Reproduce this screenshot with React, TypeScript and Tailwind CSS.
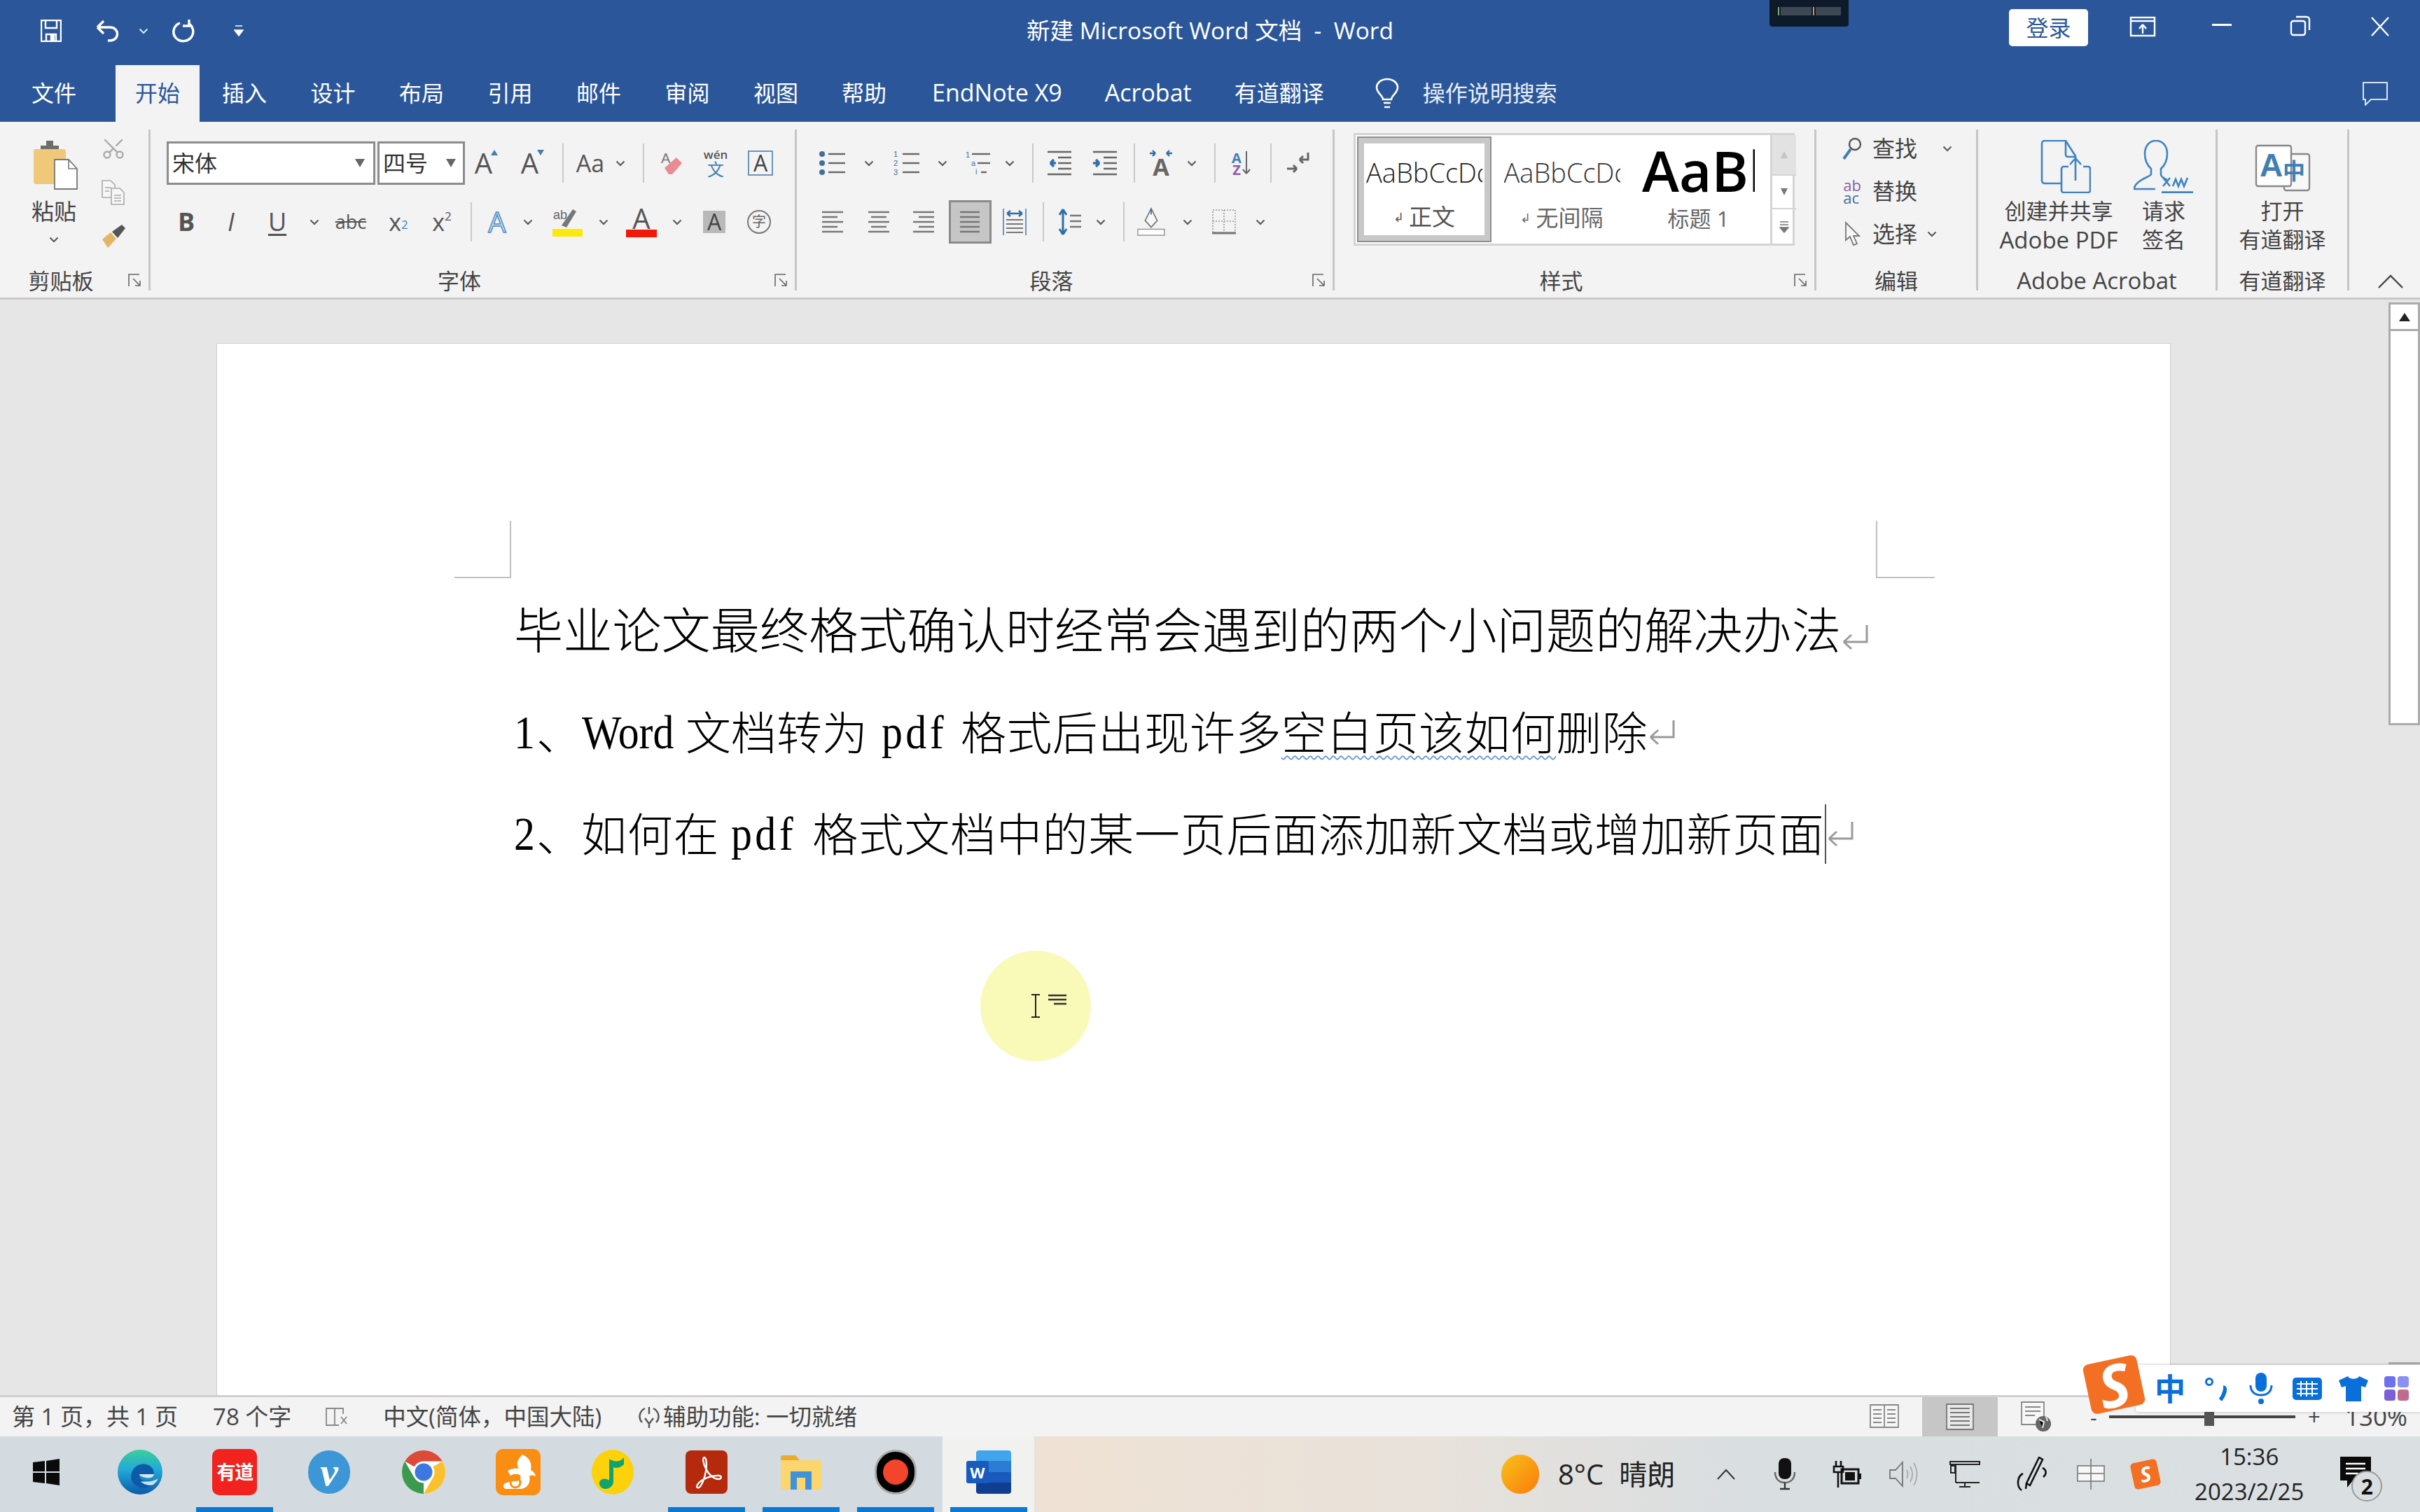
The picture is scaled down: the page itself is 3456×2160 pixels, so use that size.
import type { ReactNode } from "react";
import { Scissors } from "lucide-react";

const Slot = ({ c, children }: { c: string; children?: ReactNode }) => (
  <div className={`flex shrink-0 items-center justify-center ${c}`}>{children}</div>
);
const Chev = ({ color = "#555" }: { color?: string }) => (
  <svg width="14" height="9" viewBox="0 0 14 9"><path d="M1.5 1.5 7 7l5.5-5.5" stroke={color} strokeWidth="2" fill="none" /></svg>
);
const Sep = () => <div className="h-[56px] w-[2px] bg-[#c9c9c9]" />;
const Launcher = () => (
  <svg width="20" height="20" viewBox="0 0 20 20" fill="none" stroke="#666" strokeWidth="1.6"><path d="M1 18V1h15M7 7l10 10M17 10v7h-7" /></svg>
);
const Group = ({ c, label, launcher, children }: { c: string; label: ReactNode; launcher?: boolean; children?: ReactNode }) => (
  <div className={`flex h-[230px] shrink-0 flex-col border-r-[3px] border-[#c6c6c6] ${c}`}>
    <div className="h-[202px]">{children}</div>
    <div className="flex h-[28px] items-center text-[31px] leading-[28px] text-[#444]">
      <div className="flex-1 text-center whitespace-nowrap">{label}</div>
      {launcher && <div className="flex w-[38px] items-center justify-center"><Launcher /></div>}
    </div>
  </div>
);

const BigA = ({ up }: { up: boolean }) => (
  <div className="flex items-start text-[40px] leading-[40px] text-[#555]">
    <span>A</span>
    <svg width="12" height="10" viewBox="0 0 12 10" className="-ml-[3px]">
      <path d={up ? "M6 1l5 8H1z" : "M1 1h10L6 9z"} fill="#4a7ba8" />
    </svg>
  </div>
);
const ListLines = ({ kind }: { kind: "b" | "n" | "m" }) => (
  <svg width="40" height="36" viewBox="0 0 40 36" fontFamily="Liberation Sans" fontSize="11" fill="#3f6f9c">
    {kind === "b" && [5, 18, 31].map((y) => <circle key={y} cx="5" cy={y} r="4" fill="#3f6f9c" />)}
    {kind === "n" && ["1", "2", "3"].map((t, i) => <text key={t} x="1" y={9 + i * 13}>{t}</text>)}
    {kind === "m" && (<><text x="1" y="10">1</text><text x="9" y="22">a</text><text x="15" y="34">i</text></>)}
    {kind !== "m" ? [5, 18, 31].map((y) => <path key={y} d={`M14 ${y}h24`} stroke="#666" strokeWidth="2.4" />) : (
      <>
        <path d="M10 5h26" stroke="#666" strokeWidth="2.4" />
        <path d="M18 18h18" stroke="#666" strokeWidth="2.4" />
        <path d="M23 31h8" stroke="#666" strokeWidth="2.4" />
      </>
    )}
  </svg>
);
const Indent = ({ inward }: { inward: boolean }) => (
  <svg width="38" height="36" viewBox="0 0 38 36" fill="none">
    <path d="M2 2h34M2 34h34M17 10h19M17 18h19M17 26h19" stroke="#666" strokeWidth="2.4" />
    <path d={inward ? "M14 18H6m0 0 5-5m-5 5 5 5" : "M2 18h9m0 0-5-5m5 5-5 5"} stroke="#2f6ea8" strokeWidth="3.4" />
  </svg>
);
const Align = ({ mode }: { mode: "l" | "c" | "r" | "j" }) => {
  const ys = [2, 9, 16, 23, 30];
  const d = ys
    .map((y, i) => {
      const short = i % 2 === 1 ? 8 : 0;
      if (mode === "j") return `M1 ${y}h28`;
      if (mode === "l") return `M1 ${y}h${30 - short}`;
      if (mode === "r") return `M${1 + short} ${y}h${30 - short}`;
      return `M${1 + short / 2} ${y}h${30 - short}`;
    })
    .join("");
  return <svg width="32" height="33" viewBox="0 0 32 33"><path d={d} stroke="#777" strokeWidth="2.4" fill="none" /></svg>;
};

const PasteIcon = () => (
  <svg width="64" height="72" viewBox="0 0 64 72">
    <rect x="1" y="14" width="46" height="50" rx="3" fill="#efc87a" />
    <path d="M11 14V9h8V2h10v7h8v5z" fill="#6d6d6d" />
    <path d="M31 29h20l12 13v29H31z" fill="#fff" stroke="#777" strokeWidth="1.8" />
    <path d="M51 29v13h12" fill="none" stroke="#777" strokeWidth="1.6" />
  </svg>
);
const CopyIcon = () => (
  <svg width="34" height="36" viewBox="0 0 34 36" fill="#f6f6f6" stroke="#aaa" strokeWidth="1.6">
    <path d="M1 1h12l6 6v18H1z" />
    <path d="M14 12h12l6 6v17H14z" />
    <path d="M5 11h9M5 16h6M18 22h10M18 26h10M18 30h10" fill="none" />
  </svg>
);
const BrushIcon = () => (
  <svg width="36" height="34" viewBox="0 0 36 34">
    <path d="M2 22l12-10 8 9-12 13z" fill="#e3b565" />
    <path d="M16 11l14-10 5 5-11 14z" fill="#555" />
  </svg>
);

const FontGroup = () => (
  <div className="flex flex-col gap-[24px] pt-[18px]">
    <div className="flex h-[60px] items-center pl-[23px]">
      <div className="flex h-[62px] w-[298px] shrink-0 items-center justify-between border-[3px] border-[#8c8c8c] bg-white pr-[12px] pl-[5px] text-[32px] text-[#333]">
        <span>宋体</span>
        <svg width="14" height="16" viewBox="0 0 14 16"><path d="M0 2h14L7 14z" fill="#666" /></svg>
      </div>
      <div className="ml-[3px] flex h-[62px] w-[125px] shrink-0 items-center justify-between border-[3px] border-[#8c8c8c] bg-white pr-[10px] pl-[5px] text-[32px] text-[#333]">
        <span>四号</span>
        <svg width="14" height="16" viewBox="0 0 14 16"><path d="M0 2h14L7 14z" fill="#666" /></svg>
      </div>
      <Slot c="w-[62px]"><BigA up /></Slot>
      <Slot c="w-[70px]"><BigA up={false} /></Slot>
      <Slot c="w-[16px]"><Sep /></Slot>
      <Slot c="w-[62px] text-[34px] text-[#555]">Aa</Slot>
      <Slot c="w-[24px]"><Chev /></Slot>
      <Slot c="w-[42px]"><Sep /></Slot>
      <Slot c="w-[38px]">
        <svg width="32" height="36" viewBox="0 0 32 36">
          <text x="1" y="18" fontSize="20" fill="#777" fontFamily="Liberation Sans">A</text>
          <path d="M6 25 23 10l8 8-14 16h-5z" fill="#e88c92" />
        </svg>
      </Slot>
      <Slot c="w-[88px]">
        <div className="flex flex-col items-center leading-[18px]">
          <span className="text-[17px] font-semibold text-[#555]">wén</span>
          <span className="text-[24px] leading-[24px] text-[#3f7fb5]">文</span>
        </div>
      </Slot>
      <Slot c="w-[40px]">
        <div className="flex h-[36px] w-[36px] items-center justify-center border-2 border-[#6c95ba] text-[32px] leading-none text-[#444]">A</div>
      </Slot>
    </div>
    <div className="flex h-[60px] items-center pl-[19px] text-[#555]">
      <Slot c="w-[64px] text-[36px] font-bold">B</Slot>
      <Slot c="w-[64px] text-[36px] font-medium italic">I</Slot>
      <Slot c="w-[68px] text-[36px] underline underline-offset-4">U</Slot>
      <Slot c="w-[38px]"><Chev /></Slot>
      <Slot c="w-[66px] text-[27px] line-through">abc</Slot>
      <Slot c="w-[70px] text-[34px]">x<sub className="text-[17px] text-[#3f7fb5]">2</sub></Slot>
      <Slot c="w-[54px] text-[34px]">x<sup className="text-[17px]">2</sup></Slot>
      <Slot c="w-[30px]"><Sep /></Slot>
      <Slot c="w-[44px] text-[40px] leading-none text-[#cfe3f4] [-webkit-text-stroke:1.5px_#4f8cc0]">A</Slot>
      <Slot c="w-[44px]"><Chev /></Slot>
      <Slot c="w-[70px]">
        <svg width="46" height="42" viewBox="0 0 46 42">
          <text x="2" y="17" fontSize="18" fill="#666" fontFamily="Liberation Sans">ab</text>
          <path d="M14 26 30 3l5 3-14 23z" fill="#777" />
          <rect x="1" y="31" width="43" height="11" fill="#fce80a" />
        </svg>
      </Slot>
      <Slot c="w-[32px]"><Chev /></Slot>
      <Slot c="w-[76px]">
        <div className="flex flex-col items-center">
          <span className="text-[40px] leading-[32px] text-[#555]">A</span>
          <span className="h-[11px] w-[44px] bg-[#f01a0a]" />
        </div>
      </Slot>
      <Slot c="w-[26px]"><Chev /></Slot>
      <Slot c="w-[80px]"><div className="flex h-[32px] w-[32px] items-center justify-center bg-[#b9b9b9] text-[32px] leading-none text-[#444]">A</div></Slot>
      <Slot c="w-[48px]">
        <div className="flex h-[34px] w-[34px] items-center justify-center rounded-full border-2 border-[#777] text-[20px] leading-none text-[#666]">字</div>
      </Slot>
    </div>
  </div>
);

const ParaGroup = () => (
  <div className="flex flex-col gap-[24px] pt-[18px]">
    <div className="flex h-[60px] items-center pl-[27px]">
      <Slot c="w-[48px]"><ListLines kind="b" /></Slot>
      <Slot c="w-[56px]"><Chev /></Slot>
      <Slot c="w-[52px]"><ListLines kind="n" /></Slot>
      <Slot c="w-[50px]"><Chev /></Slot>
      <Slot c="w-[54px]"><ListLines kind="m" /></Slot>
      <Slot c="w-[34px]"><Chev /></Slot>
      <Slot c="w-[32px]"><Sep /></Slot>
      <Slot c="w-[44px]"><Indent inward /></Slot>
      <Slot c="ml-[18px] w-[50px]"><Indent inward={false} /></Slot>
      <Slot c="w-[34px]"><Sep /></Slot>
      <Slot c="w-[42px]">
        <div className="flex flex-col items-center">
          <svg width="36" height="10" viewBox="0 0 36 10"><path d="M2 5h8m0 0-4-4m4 4-4 4M34 5h-8m0 0 4-4m-4 4 4 4" transform="matrix(-1 0 0 1 36 0)" stroke="#2f6ea8" strokeWidth="2.4" fill="none" /></svg>
          <span className="text-[34px] leading-[28px] font-bold text-[#666]">A</span>
        </div>
      </Slot>
      <Slot c="w-[46px]"><Chev /></Slot>
      <Slot c="w-[20px]"><Sep /></Slot>
      <Slot c="w-[56px]">
        <div className="flex items-end">
          <div className="flex flex-col items-center text-[20px] leading-[17px] font-bold">
            <span className="text-[#3f7fb5]">A</span>
            <span className="text-[#8a5fa8]">Z</span>
          </div>
          <svg width="14" height="36" viewBox="0 0 14 36"><path d="M7 1v32m0 0-5-6m5 6 5-6" stroke="#666" strokeWidth="2" fill="none" /></svg>
        </div>
      </Slot>
      <Slot c="w-[28px]"><Sep /></Slot>
      <Slot c="w-[48px]">
        <svg width="34" height="34" viewBox="0 0 34 34" fill="none" stroke="#666" strokeWidth="3">
          <path d="M32 2v10H20m0 0 5-5m-5 5 5 5" />
          <path d="M2 25h14m0 0-5-5m5 5-5 5" />
        </svg>
      </Slot>
    </div>
    <div className="flex h-[60px] items-center pl-[27px]">
      <Slot c="w-[48px]"><Align mode="l" /></Slot>
      <Slot c="w-[84px]"><Align mode="c" /></Slot>
      <Slot c="w-[44px]"><Align mode="r" /></Slot>
      <Slot c="ml-[14px] h-[62px] w-[61px] border-[3px] border-[#8a8a8a] bg-[#c6c6c6]"><Align mode="j" /></Slot>
      <Slot c="w-[66px]">
        <svg width="36" height="38" viewBox="0 0 36 38" fill="none">
          <path d="M2 0v38M34 0v38" stroke="#5a8fc0" strokeWidth="1.8" />
          <path d="M6 16h24M6 22h24M6 28h24M6 34h24" stroke="#777" strokeWidth="2.2" />
          <path d="M7 7h22M7 7l5-4M7 7l5 4M29 7l-5-4M29 7l-5 4" stroke="#2f6ea8" strokeWidth="2.4" />
        </svg>
      </Slot>
      <Slot c="w-[16px]"><Sep /></Slot>
      <Slot c="w-[60px]">
        <svg width="36" height="38" viewBox="0 0 36 38" fill="none">
          <path d="M8 1v36M8 1 3 9M8 1l5 8M8 37l-5-8M8 37l5-8" stroke="#2f6ea8" strokeWidth="3" />
          <path d="M18 10h16M18 18h16M18 26h16" stroke="#777" strokeWidth="2.4" />
        </svg>
      </Slot>
      <Slot c="w-[28px]"><Chev /></Slot>
      <Slot c="w-[38px]"><Sep /></Slot>
      <Slot c="w-[40px]">
        <svg width="42" height="42" viewBox="0 0 42 42" fill="none">
          <path d="M21 1l9 18-9 10-9-10z" fill="#f7f7f7" stroke="#777" strokeWidth="1.8" />
          <path d="M21 1v9" stroke="#2f6ea8" strokeWidth="1.8" />
          <rect x="1" y="32" width="40" height="9" fill="#fff" stroke="#999" strokeWidth="1.6" />
        </svg>
      </Slot>
      <Slot c="w-[64px]"><Chev /></Slot>
      <Slot c="w-[40px]">
        <svg width="34" height="36" viewBox="0 0 34 36" fill="none">
          <path d="M1 1h32v32H1zM17 1v32M1 17h32" stroke="#999" strokeWidth="1.6" strokeDasharray="2 2" />
          <path d="M0 34h34" stroke="#777" strokeWidth="3" />
        </svg>
      </Slot>
      <Slot c="w-[64px]"><Chev /></Slot>
    </div>
  </div>
);

const StyleGallery = () => (
  <div className="pt-[5px] pl-[27px]">
    <div className="flex h-[161px] w-[630px] border-[3px] border-[#d4d4d4] bg-white">
      <div className="m-[2px] flex w-[192px] shrink-0 flex-col items-center border-[10px] border-[#c8c8c8] outline-2 outline-[#8f8f8f] -outline-offset-2">
        <div className="mt-[18px] h-[46px] w-[166px] overflow-hidden text-[38px] leading-[46px] font-light whitespace-nowrap text-[#222]">AaBbCcDc</div>
        <div className="mt-[21px] flex items-center gap-[7px] text-[33px] leading-[40px] text-[#555]"><span className="text-[18px]">↲</span>正文</div>
      </div>
      <div className="ml-[6px] flex w-[185px] shrink-0 flex-col items-center">
        <div className="mt-[30px] h-[46px] w-[166px] overflow-hidden text-[38px] leading-[46px] font-light whitespace-nowrap text-[#333]">AaBbCcDc</div>
        <div className="mt-[22px] flex items-center gap-[7px] text-[32px] leading-[40px] text-[#666]"><span className="text-[18px]">↲</span>无间隔</div>
      </div>
      <div className="flex w-[205px] shrink-0 flex-col items-center">
        <div className="mt-[11px] h-[78px] w-[161px] overflow-hidden text-[80px] leading-[78px] font-semibold whitespace-nowrap text-black">AaBbCc</div>
        <div className="mt-[10px] text-[31px] leading-[40px] text-[#666]">标题 1</div>
      </div>
      <div className="ml-auto flex w-[37px] shrink-0 flex-col border-l-[3px] border-[#d4d4d4]">
        <Slot c="h-[56px] bg-[#e2e2e2]"><svg width="12" height="12" viewBox="0 0 12 12"><path d="M6 1l5 10H1z" fill="#c4c4c4" /></svg></Slot>
        <Slot c="h-[50px] border-y-[2px] border-[#d4d4d4]"><svg width="12" height="12" viewBox="0 0 12 12"><path d="M1 1h10L6 11z" fill="#777" /></svg></Slot>
        <Slot c="flex-1"><svg width="14" height="18" viewBox="0 0 14 18"><path d="M1 2h12M1 6h12M1 10h12L7 17z" fill="#777" stroke="#777" strokeWidth="1.4" /></svg></Slot>
      </div>
    </div>
  </div>
);

const EditGroup = () => (
  <div className="flex flex-col gap-[7px] text-[32px] text-[#444]">
    <div className="flex h-[54px] items-center">
      <Slot c="ml-[31px] w-[40px]">
        <svg width="28" height="34" viewBox="0 0 28 34" fill="none"><circle cx="18" cy="11" r="8" stroke="#555" strokeWidth="2.4" /><path d="M12 18 2 32" stroke="#3f7fb5" strokeWidth="4" /></svg>
      </Slot>
      <span className="ml-[9px]">查找</span>
      <Slot c="ml-[36px] w-[14px]"><Chev /></Slot>
    </div>
    <div className="flex h-[54px] items-center">
      <Slot c="ml-[31px] w-[40px]">
        <div className="flex flex-col text-[22px] leading-[18px]"><span className="text-[#8a5fa8]">ab</span><span className="text-[#3f6f9c]">ac</span></div>
      </Slot>
      <span className="ml-[9px]">替换</span>
    </div>
    <div className="flex h-[54px] items-center">
      <Slot c="ml-[31px] w-[40px]">
        <svg width="24" height="36" viewBox="0 0 24 36"><path d="M3 2v25l6-5 5 12 5-2-5-11h8z" fill="#f7f7f7" stroke="#777" strokeWidth="1.8" /></svg>
      </Slot>
      <span className="ml-[9px]">选择</span>
      <Slot c="ml-[14px] w-[14px]"><Chev /></Slot>
    </div>
  </div>
);

const Blue = "#3f83c4";
const PdfShare = () => (
  <svg width="72" height="76" viewBox="0 0 72 76" fill="none" stroke={Blue} strokeWidth="2.6">
    <path d="M30 62H6a4 4 0 0 1-4-4V5a4 4 0 0 1 4-4h30l14 22v6" />
    <path d="M36 1v20a3 3 0 0 0 3 3h11" />
    <path d="M40 38h-7a3 3 0 0 0-3 3v31a3 3 0 0 0 3 3h35a3 3 0 0 0 3-3V41a3 3 0 0 0-3-3h-7" />
    <path d="M50 58V26m0 0-8 9m8-9 8 9" />
  </svg>
);
const SignPerson = () => (
  <svg width="86" height="76" viewBox="0 0 86 76" fill="none" stroke={Blue} strokeWidth="2.6">
    <path d="M32 1c-10 0-16 8-16 19 0 9 4 17 9 21v8c0 3-22 8-24 20v1h30" />
    <path d="M32 1c10 0 16 8 16 19 0 9-4 17-9 21v8c0 4 5 6 9 8" />
    <path d="M42 54l10 12M52 54 42 66" />
    <path d="M56 66l4-10 4 10 4-10 4 10 5-12" />
    <path d="M40 75h45" strokeWidth="3.4" />
  </svg>
);
const YoudaoIcon = () => (
  <svg width="84" height="70" viewBox="0 0 84 70">
    <rect x="44" y="14" width="36" height="52" rx="3" fill="#f8f8f8" stroke="#888" strokeWidth="2.4" />
    <rect x="4" y="2" width="50" height="58" rx="3" fill="#fff" stroke="#888" strokeWidth="2.4" />
    <text x="9" y="46" fontSize="46" fontWeight="700" fill="#3f7fb5" fontFamily="Liberation Sans">A</text>
    <text x="42" y="50" fontSize="32" fontWeight="700" fill="#3f7fb5" fontFamily="Noto Sans CJK SC">中</text>
  </svg>
);

const LargeBtn = ({ c, icon, l1, l2 }: { c: string; icon: ReactNode; l1: ReactNode; l2: ReactNode }) => (
  <div className={`flex shrink-0 flex-col items-center text-[31px] leading-[41px] text-[#444] ${c}`}>
    <div className="flex h-[96px] items-end pb-[5px]">{icon}</div>
    <span className="whitespace-nowrap">{l1}</span>
    <span className="whitespace-nowrap">{l2}</span>
  </div>
);

const Taskbar = () => {
  const Item = ({ c, on, children }: { c: string; on?: boolean; children?: ReactNode }) => (
    <div className={`flex h-full shrink-0 flex-col items-center ${c}`}>
      <div className="flex flex-1 items-center justify-center">{children}</div>
      <div className={`h-[7px] w-[110px] ${on ? "bg-[#0b78d4]" : ""}`} />
    </div>
  );
  return (
    <div className="flex h-[108px] shrink-0 bg-[linear-gradient(90deg,#d4dbe0_0%,#d4dbe0_42%,#efe2d4_43%,#e9e2da_58%,#d9dee1_72%,#dadfe2_100%)]">
      <div className="flex w-[1476px] shrink-0 bg-[#d4dbe0]">
        <Item c="w-[132px]">
          <svg width="38" height="38" viewBox="0 0 38 38" fill="#0a0a0a">
            <path d="M0 5l17-2v15H0zM19 3l19-3v18H19zM0 20h17v15l-17-2zM19 20h19v18l-19-3z" />
          </svg>
        </Item>
        <Item c="w-[136px]">
          <svg width="66" height="66" viewBox="0 0 64 64">
            <defs>
              <linearGradient id="ed1" x1="0" y1="0" x2="0" y2="1"><stop offset="0" stopColor="#3bcf98" /><stop offset=".45" stopColor="#22a8d8" /><stop offset="1" stopColor="#0b5aa8" /></linearGradient>
            </defs>
            <circle cx="32" cy="32" r="31" fill="url(#ed1)" />
            <path d="M20 35c2-10 10-15 19-14 9 1 13 8 12 14H31c-1 6 5 10 13 10 5 0 9-2 13-4-5 9-13 14-22 13-10-1-17-9-15-19z" fill="#0d5ba8" />
            <path d="M31 35h20c1 3-4 6-10 5-5-1-9-2-10-5z" fill="#d6e8ec" />
            <path d="M44 45c5 0 9-2 13-4-1 3-4 7-8 9-5 1-12-1-16-5 3 0 7 0 11 0z" fill="#c7e4ea" />
          </svg>
        </Item>
        <Item c="w-[134.8px]" on>
          <div className="flex h-[66px] w-[64px] items-center justify-center rounded-[10px] bg-[#f2231e] text-[27px] leading-none font-bold tracking-[-1px] whitespace-nowrap text-white">有道</div>
        </Item>
        <Item c="w-[134.8px]">
          <div className="flex h-[62px] w-[60px] items-center justify-center rounded-full bg-[#3d97d6] font-['Liberation_Serif'] text-[58px] leading-[48px] font-bold text-white italic">v</div>
        </Item>
        <Item c="w-[134.8px]">
          <svg width="64" height="64" viewBox="0 0 64 64">
            <circle cx="32" cy="32" r="31" fill="#fff" />
            <path d="M5.15 16.5A31 31 0 0 1 58.85 16.5H32A15.5 15.5 0 0 0 18.58 24.25Z" fill="#dc4a38" />
            <path d="M58.85 16.5A31 31 0 0 1 32 63L45.42 39.75A15.5 15.5 0 0 0 45.42 24.25Z" fill="#fbc02d" />
            <path d="M32 63A31 31 0 0 1 5.15 16.5L18.58 39.75A15.5 15.5 0 0 0 32 47.5Z" fill="#3c9a4f" />
            <circle cx="32" cy="32" r="12.5" fill="#3b78e0" />
          </svg>
        </Item>
        <Item c="w-[134.8px]">
          <svg width="64" height="66" viewBox="0 0 64 66">
            <rect width="64" height="66" rx="10" fill="#f98e12" />
            <path d="M38 8c10 4 14 12 12 22 4 2 6 5 7 9-4-2-7-2-9 0 2 8-2 17-12 18H15c-4 0-6-5-2-8 8-3 12-3 16-3 5-1 8-4 6-8-2-3-9-3-14 0l-4-7c4-3 10-4 16-3-4-6-3-12 5-20z" fill="#fff" />
            <circle cx="28" cy="48" r="7" fill="none" stroke="#f98e12" strokeWidth="3" />
          </svg>
        </Item>
        <Item c="w-[134.8px]">
          <svg width="62" height="66" viewBox="0 0 62 66">
            <ellipse cx="31" cy="33" rx="30" ry="32" fill="#fdd20a" />
            <path d="M26 45V14c6 5 16 5 21-2v10c-5 5-12 6-15 4v20c0 7-6 11-11 11-6 0-9-4-9-8 0-6 8-9 14-4z" fill="#0fa372" />
          </svg>
        </Item>
        <Item c="w-[134.8px]" on>
          <div className="flex h-[62px] w-[60px] items-center justify-center rounded-[8px] bg-[#b52a0d]">
            <svg width="46" height="48" viewBox="0 0 46 48" fill="none" stroke="#fff" strokeWidth="2.4">
              <path d="M20 3c-3 0-2 8 2 16 4 9 12 15 18 15 5 0 5-5 0-5-10 0-24 4-30 13-3 5 2 6 5 1 5-8 10-26 7-38z" />
            </svg>
          </div>
        </Item>
        <Item c="w-[134.8px]" on>
          <svg width="58" height="50" viewBox="0 0 58 50">
            <path d="M0 4a3 3 0 0 1 3-3h18l6 7H0z" fill="#e9ac2f" />
            <rect y="8" width="58" height="42" rx="3" fill="#fbd66e" />
            <path d="M14 50V24h30v26h-9V33H23v17z" fill="#3f93da" />
          </svg>
        </Item>
        <Item c="w-[134.8px]" on>
          <div className="flex h-[64px] w-[60px] items-center justify-center rounded-full border-[3px] border-[#aaa] bg-black">
            <div className="h-[36px] w-[36px] rounded-full bg-[#f2452c]" />
          </div>
        </Item>
        <Item c="w-[131px] bg-[#f1f1f0]" on>
          <div className="relative h-[62px] w-[64px]">
            <div className="ml-[14px] flex h-[62px] w-[50px] flex-col overflow-hidden rounded-[4px]">
              <div className="flex-1 bg-[#41a5ee]" />
              <div className="flex-1 bg-[#2b7cd3]" />
              <div className="flex-1 bg-[#185abd]" />
              <div className="flex-1 bg-[#103f91]" />
            </div>
            <div className="absolute top-[15px] left-0 flex h-[32px] w-[32px] items-center justify-center rounded-[3px] bg-[#185abd] text-[22px] leading-none font-bold text-white">W</div>
          </div>
        </Item>
      </div>
      <div className="flex flex-1 items-center">
        <div className="ml-[668px] h-[56px] w-[54px] shrink-0 rounded-full bg-[linear-gradient(135deg,#f8c21a,#fb7a0b)]" />
        <span className="ml-[27px] flex gap-[22px] text-[40px] whitespace-nowrap text-[#222]"><span>8°C</span><span>晴朗</span></span>
        <Slot c="ml-[43px] w-[60px]">
          <svg width="30" height="18" viewBox="0 0 30 18"><path d="M3 16 15 3l12 13" stroke="#333" strokeWidth="2" fill="none" /></svg>
        </Slot>
        <Slot c="ml-[24px] w-[60px]">
          <svg width="34" height="46" viewBox="0 0 34 46"><rect x="8" y="0" width="18" height="30" rx="8" fill="#111" /><path d="M3 20c0 10 6 15 14 15s14-5 14-15" fill="none" stroke="#666" strokeWidth="2.4" /><path d="M17 35v9M10 44h14" stroke="#333" strokeWidth="2.4" /></svg>
        </Slot>
        <Slot c="ml-[29px] w-[60px]">
          <svg width="42" height="38" viewBox="0 0 42 38"><path d="M5 0v8M12 0v8M2 8h13v8H2zM8 16v22" stroke="#111" strokeWidth="2.6" fill="none" /><rect x="13" y="12" width="24" height="20" fill="none" stroke="#111" strokeWidth="3" /><rect x="18" y="16" width="14" height="12" fill="#111" /><rect x="38" y="18" width="3" height="8" fill="#111" /></svg>
        </Slot>
        <Slot c="ml-[20px] w-[60px]">
          <svg width="42" height="40" viewBox="0 0 42 40" fill="none" stroke="#777" strokeWidth="1.8"><path d="M2 14h8L20 3v34L10 26H2z" /><path d="M26 14c2 4 2 8 0 12M31 9c4 7 4 15 0 22M36 4c6 10 6 22 0 32" stroke="#aaa" /></svg>
        </Slot>
        <Slot c="ml-[28px] w-[60px]">
          <svg width="44" height="40" viewBox="0 0 44 40" fill="none" stroke="#222" strokeWidth="2"><path d="M1 2h42v4H1zM9 6v26M9 32h34M22 32v6M14 38h16" /><rect x="2" y="8" width="6" height="10" /></svg>
        </Slot>
        <Slot c="ml-[36px] w-[60px]">
          <svg width="46" height="50" viewBox="0 0 46 50" fill="none" stroke="#111" strokeWidth="2.6"><path d="M33 1 15 38l5 3 18-37zM15 38l-1 8" /><path d="M38 16c6 3 6 9 1 13M10 24C2 28 0 42 8 48" /></svg>
        </Slot>
        <Slot c="ml-[24px] w-[60px]">
          <svg width="42" height="44" viewBox="0 0 42 44" fill="#f7f7f7" stroke="#777" strokeWidth="1.6"><rect x="2" y="10" width="38" height="22" /><path d="M21 0v44M2 21h38" fill="none" /></svg>
        </Slot>
        <Slot c="ml-[18px] w-[60px]">
          <div className="flex h-[38px] w-[38px] -rotate-12 items-center justify-center rounded-[5px] bg-[#f26f24] text-[30px] leading-none font-bold text-white italic">S</div>
        </Slot>
        <div className="ml-[18px] flex w-[200px] shrink-0 flex-col items-center text-[33px] leading-[50px] text-[#222]">
          <span>15:36</span>
          <span className="whitespace-nowrap">2023/2/25</span>
        </div>
        <Slot c="relative ml-[22px] w-[60px]">
          <svg width="44" height="50" viewBox="0 0 44 50"><path d="M0 0h44v34H18l-8 10v-10H0z" fill="#0a0a0a" /><path d="M8 10h28M8 17h28M8 24h18" stroke="#fff" strokeWidth="2.4" /></svg>
          <div className="absolute top-[20px] left-[24px] flex h-[44px] w-[44px] items-center justify-center rounded-full border-2 border-[#999] bg-[#d9dee1] text-[30px] font-bold text-[#111]">2</div>
        </Slot>
      </div>
    </div>
  );
};

const Ret = () => (
  <svg width="40" height="38" viewBox="0 0 40 38" fill="none" stroke="#9a9a9a" strokeWidth="3" className="inline-block align-[-2px]">
    <path d="M37 2v24H4m0 0 11-10M4 26l11 10" />
  </svg>
);
const Lat = ({ c, children }: { c: string; children: ReactNode }) => (
  <span className={`inline-block origin-left scale-x-[0.88] font-['Liberation_Serif'] text-[68px] ${c}`}>{children}</span>
);

export default function App() {
  return (
    <div className="relative flex h-[2160px] w-[3456px] flex-col overflow-hidden bg-[#e6e6e6] font-['Open_Sans','Noto_Sans_CJK_SC',sans-serif]">
      {/* title bar */}
      <div className="grid h-[88px] shrink-0 grid-cols-[1fr_auto_1fr] bg-[#2b579a] text-white">
        <div className="flex items-center">
          <Slot c="ml-[50px] w-[46px]">
            <svg width="30" height="32" viewBox="0 0 30 32" fill="none" stroke="#fff" strokeWidth="2.4"><path d="M1 1h28v30H1zM7 1v11h16V1M8 31V21h14v10" /><rect x="15" y="23" width="4" height="8" fill="#fff" /></svg>
          </Slot>
          <Slot c="ml-[34px] w-[48px]">
            <svg width="36" height="32" viewBox="0 0 36 32" fill="none" stroke="#fff" strokeWidth="3.4"><path d="M3 11h18c14 0 14 19 0 19h-3M3 11l9-9M3 11l9 9" /></svg>
          </Slot>
          <Slot c="ml-[17px] w-[20px]"><Chev color="#dbe5f1" /></Slot>
          <Slot c="ml-[25px] w-[44px]">
            <svg width="32" height="34" viewBox="0 0 32 34" fill="none" stroke="#fff" strokeWidth="3.4"><path d="M11 6C2 9-1 20 5 27c6 7 18 6 23-2 4-7 1-15-5-19M24 1v9h-9" /></svg>
          </Slot>
          <Slot c="ml-[37px] w-[40px]">
            <svg width="14" height="18" viewBox="0 0 14 18"><path d="M2 2h10M1 8h12L7 16z" fill="#fff" stroke="#fff" strokeWidth="1.6" /></svg>
          </Slot>
        </div>
        <div className="flex items-center pb-[1px] text-[33.5px] whitespace-pre">新建 Microsoft Word 文档  -  Word</div>
        <div className="flex h-[76px] items-start justify-end">
          <div className="flex h-[38px] w-[113px] shrink-0 items-center justify-center gap-[2px] rounded-b-[4px] bg-[#0d1a2a] pb-[6px]">
            <span className="h-[12px] w-[2px] bg-[#8aa86a]" />
            <span className="h-[12px] w-[44px] bg-[#3d4854]" />
            <span className="h-[12px] w-[2px] bg-[#d9923a]" />
            <span className="h-[12px] w-[36px] bg-[#3d4854]" />
          </div>
          <div className="mt-[13px] ml-[229px] flex h-[53px] w-[113px] shrink-0 items-center justify-center rounded-[5px] bg-white text-[32px] text-[#2b579a]">登录</div>
          <Slot c="mt-[23px] ml-[48px] w-[60px]">
            <svg width="38" height="30" viewBox="0 0 38 30" fill="none" stroke="#fff" strokeWidth="2.4"><rect x="2" y="2" width="34" height="26" /><path d="M2 7h34M19 25V12m0 0-5 6m5-6 5 6" /></svg>
          </Slot>
          <Slot c="mt-[34px] ml-[53px] w-[60px]"><div className="h-[3px] w-[28px] bg-white" /></Slot>
          <Slot c="mt-[22px] ml-[52px] w-[60px]">
            <svg width="30" height="30" viewBox="0 0 30 30" fill="none" stroke="#fff" strokeWidth="2.4"><rect x="2" y="8" width="20" height="20" rx="3" /><path d="M9 2h15a4 4 0 0 1 4 4v15" /></svg>
          </Slot>
          <Slot c="mt-[23px] ml-[54px] w-[60px]">
            <svg width="30" height="30" viewBox="0 0 30 30" stroke="#fff" strokeWidth="2.4"><path d="M3 2l24 26M27 2 3 28" /></svg>
          </Slot>
          <div className="w-[27px] shrink-0" />
        </div>
      </div>
      {/* tabs */}
      <div className="flex h-[86px] shrink-0 items-end bg-[#2b579a] text-[32px] text-white">
        <div className="ml-[14px] flex h-[81px] w-[126px] shrink-0 items-center justify-center pb-[2px]">文件</div>
        <div className="ml-[25px] flex h-[81px] w-[120px] shrink-0 items-center justify-center bg-[#f3f3f3] pb-[2px] text-[#2b579a]">开始</div>
        <div className="ml-[1px] flex h-[81px] w-[126px] shrink-0 items-center justify-center pb-[2px]">插入</div>
        <div className="flex h-[81px] w-[127px] shrink-0 items-center justify-center pb-[2px]">设计</div>
        <div className="flex h-[81px] w-[126px] shrink-0 items-center justify-center pb-[2px]">布局</div>
        <div className="flex h-[81px] w-[127px] shrink-0 items-center justify-center pb-[2px]">引用</div>
        <div className="flex h-[81px] w-[126px] shrink-0 items-center justify-center pb-[2px]">邮件</div>
        <div className="flex h-[81px] w-[127px] shrink-0 items-center justify-center pb-[2px]">审阅</div>
        <div className="flex h-[81px] w-[126px] shrink-0 items-center justify-center pb-[2px]">视图</div>
        <div className="flex h-[81px] w-[126px] shrink-0 items-center justify-center pb-[2px]">帮助</div>
        <div className="ml-[34px] flex h-[81px] shrink-0 items-center pb-[2px] text-[34px] whitespace-nowrap">EndNote X9</div>
        <div className="ml-[61px] flex h-[81px] shrink-0 items-center pb-[2px] text-[34px]">Acrobat</div>
        <div className="ml-[61px] flex h-[81px] shrink-0 items-center pb-[2px] whitespace-nowrap">有道翻译</div>
        <Slot c="ml-[66px] h-[81px] w-[48px]">
          <svg width="34" height="46" viewBox="0 0 34 46" fill="none" stroke="#fff" strokeWidth="2.6"><path d="M11 31c0-6-9-9-9-17C2 7 9 2 17 2s15 5 15 12c0 8-9 11-9 17z" /><path d="M12 36h10M13 42h8" /></svg>
        </Slot>
        <div className="ml-[27px] flex h-[81px] shrink-0 items-center pb-[2px] whitespace-nowrap text-[#e8eef6]">操作说明搜索</div>
        <Slot c="ml-auto mr-[46px] h-[81px] w-[36px]">
          <svg width="36" height="34" viewBox="0 0 36 34" fill="none" stroke="#d9e3f0" strokeWidth="2"><path d="M1 1h34v24H12l-8 8v-8H1z" /></svg>
        </Slot>
      </div>
      {/* ribbon */}
      <div className="flex h-[254px] shrink-0 items-start border-b-[3px] border-[#c8c8c8] bg-[#f3f3f3] pt-[11px]">
        <Group c="w-[215px]" label="剪贴板" launcher>
          <div className="flex">
            <div className="flex w-[148px] shrink-0 flex-col items-center pl-[6px] text-[32px] leading-[41px] text-[#444]">
              <div className="h-[96px] pt-[14px] pl-[4px]"><PasteIcon /></div>
              <span>粘贴</span>
              <span className="flex h-[41px] items-center"><Chev /></span>
            </div>
            <div className="-ml-[4px] flex flex-col items-center gap-[27px] pt-[9px]">
              <Scissors size={36} strokeWidth={1.6} color="#aaa" className="-rotate-90" />
              <CopyIcon />
              <BrushIcon />
            </div>
          </div>
        </Group>
        <Group c="w-[923px]" label="字体" launcher><FontGroup /></Group>
        <Group c="w-[768px]" label="段落" launcher><ParaGroup /></Group>
        <Group c="w-[688px]" label="样式" launcher><StyleGallery /></Group>
        <Group c="w-[231px]" label="编辑"><EditGroup /></Group>
        <Group c="w-[342px]" label={<span className="text-[33px]">Adobe Acrobat</span>}>
          <div className="flex">
            <LargeBtn c="w-[230px]" icon={<div className="ml-[20px]"><PdfShare /></div>} l1="创建并共享" l2={<span className="text-[33px]">Adobe PDF</span>} />
            <LargeBtn c="w-[70px]" icon={<SignPerson />} l1="请求" l2="签名" />
          </div>
        </Group>
        <Group c="w-[188px]" label="有道翻译">
          <LargeBtn c="w-[185px]" icon={<YoudaoIcon />} l1="打开" l2="有道翻译" />
        </Group>
        <div className="flex-1 pt-[206px] pl-[40px]">
          <svg width="38" height="22" viewBox="0 0 38 22"><path d="M2 20 19 3l17 17" stroke="#444" strokeWidth="2.4" fill="none" /></svg>
        </div>
      </div>
      {/* document */}
      <div className="flex min-h-0 flex-1 overflow-hidden bg-[#e6e6e6]">
        <div className="mt-[62px] ml-[309px] w-[2791px] shrink-0 border-x border-t border-[#cfcfcf] bg-white pt-[253px] pr-[336px] pl-[339px] text-black">
          <div className="flex justify-between">
            <div className="h-[82px] w-[81px] border-r-2 border-b-2 border-[#c0c0c0]" />
            <div className="h-[82px] w-[84px] border-b-2 border-l-2 border-[#c0c0c0]" />
          </div>
          <div className="mt-[24px] ml-[85px] h-[100px] text-[70.2px] leading-[100px] font-light whitespace-pre">毕业论文最终格式确认时经常会遇到的两个小问题的解决办法<Ret /></div>
          <div className="mt-[46px] ml-[85px] flex h-[100px] items-center text-[65px] leading-[100px] font-light whitespace-pre">
            <Lat c="w-[32px]">1</Lat>
            <span>、</span>
            <Lat c="w-[130px]">Word</Lat>
            <span className="ml-[18px]">文档转为</span>
            <Lat c="ml-[20px] w-[92px] tracking-[5px]">pdf</Lat>
            <span className="ml-[21px] tracking-[0.4px]">格式后出现许多<span className="underline decoration-[#6a9bd0] decoration-wavy decoration-2 underline-offset-[8px]">空白页该如何</span>删除</span>
            <Ret />
          </div>
          <div className="mt-[45px] ml-[85px] flex h-[100px] items-center text-[65px] leading-[100px] font-light whitespace-pre">
            <Lat c="w-[32px]">2</Lat>
            <span className="-mr-[1px]">、</span>
            <span className="tracking-[0.7px]">如何在</span>
            <Lat c="ml-[17px] w-[94px] tracking-[5px]">pdf</Lat>
            <span className="ml-[22px] tracking-[0.7px]">格式文档中的某一页后面添加新文档或增加新页面</span>
            <span className="h-[85px] w-[2px] shrink-0 bg-[#555]" />
            <Ret />
          </div>
        </div>
        <div className="ml-auto flex w-[45px] shrink-0 flex-col">
          <Slot c="mt-[4px] h-[41px] border-[3px] border-[#ababab] bg-white">
            <svg width="18" height="14" viewBox="0 0 18 14"><path d="M9 1l8 12H1z" fill="#222" /></svg>
          </Slot>
          <div className="h-[563px] border-x-[3px] border-b-[3px] border-[#ababab] bg-white" />
          <div className="mt-auto h-[47px] border-t-[3px] border-[#ababab]" />
        </div>
      </div>
      {/* status bar */}
      <div className="flex h-[59px] shrink-0 items-center border-t-[3px] border-[#d0d0d0] bg-[#f3f3f3] text-[33px] whitespace-nowrap text-[#444]">
        <span className="ml-[17px]">第 1 页，共 1 页</span>
        <span className="ml-[50px]">78 个字</span>
        <Slot c="ml-[48px] w-[33px]">
          <svg width="32" height="30" viewBox="0 0 32 30" fill="none" stroke="#888" strokeWidth="1.8"><path d="M1 3h12v24H1zM13 3h12v8M13 27h6M22 15l8 10M30 15l-8 10" /></svg>
        </Slot>
        <span className="ml-[50px] text-[32.5px]">中文(简体，中国大陆)</span>
        <Slot c="ml-[50px] w-[36px]">
          <svg width="36" height="36" viewBox="0 0 36 36" fill="none" stroke="#555" strokeWidth="2.4"><path d="M12 6C4 10 2 20 8 26M24 6c8 4 10 14 4 20M18 4v10M12 20l6 8 6-8M18 28v6" /></svg>
        </Slot>
        <span className="ml-[2px] text-[32.5px]">辅助功能: 一切就绪</span>
        <Slot c="ml-auto w-[50px]">
          <svg width="44" height="38" viewBox="0 0 44 38" fill="#f6f6f6" stroke="#888" strokeWidth="1.8"><path d="M2 2h20v32H2zM22 2h20v32H22zM6 9h12M6 15h12M6 21h12M6 27h12M26 9h12M26 15h12M26 21h12M26 27h12" /></svg>
        </Slot>
        <Slot c="ml-[29px] h-[56px] w-[108px] bg-[#c6c6c6]">
          <svg width="40" height="38" viewBox="0 0 40 38" fill="#e8e8e8" stroke="#777" strokeWidth="1.8"><path d="M1 1h38v36H1zM6 7h28M6 13h28M6 19h28M6 25h28M6 31h28" /></svg>
        </Slot>
        <Slot c="ml-[30px] w-[50px]">
          <svg width="44" height="44" viewBox="0 0 44 44"><path d="M1 1h32v32H1z" fill="#f6f6f6" stroke="#888" strokeWidth="1.8" /><path d="M6 8h22M6 14h22M6 20h14" stroke="#888" strokeWidth="1.8" /><circle cx="32" cy="32" r="11" fill="#666" /><path d="M26 26l7 3-2 9M36 22l2 6" stroke="#eee" strokeWidth="2" /></svg>
        </Slot>
        <span className="ml-[52px] w-[10px] text-[30px]">-</span>
        <div className="relative ml-[17px] h-[4px] w-[266px] shrink-0 bg-[#444]">
          <div className="absolute -top-[5px] left-[136px] h-[20px] w-[14px] bg-[#555]" />
        </div>
        <span className="ml-[18px] w-[18px] text-[31px]">+</span>
        <span className="mr-[18px] ml-[35px] text-[35px]">130%</span>
      </div>
      <Taskbar />
      {/* overlays */}
      <div className="absolute top-[1358px] left-[1400px] flex h-[158px] w-[158px] items-center justify-center rounded-full bg-[#f9f9b8]">
        <svg width="100" height="60" viewBox="0 0 100 60" fill="none" stroke="#222" strokeWidth="2">
          <path d="M44 14h12M44 46h12M50 14v32" />
          <path d="M68 15h26M68 21h26M76 27h18" stroke="#333" strokeWidth="2.4" />
        </svg>
      </div>
      <div className="absolute top-[1950px] left-[3050px] flex h-[67px] w-[406px] items-center rounded-l-[4px] bg-white pl-[26px] shadow-[0_0_4px_rgba(0,0,0,0.25)]">
        <Slot c="w-[46px] text-[44px] leading-none font-bold text-[#0a6fd8]">中</Slot>
        <Slot c="ml-[20px] w-[46px]">
          <svg width="34" height="38" viewBox="0 0 34 38" fill="none" stroke="#0a6fd8" strokeWidth="3"><circle cx="7" cy="9" r="4.5" /><path d="M27 17c2 0 3 2 2 6-1 4-3 8-6 12" strokeWidth="5.5" /></svg>
        </Slot>
        <Slot c="ml-[18px] w-[46px]">
          <svg width="36" height="46" viewBox="0 0 36 46"><rect x="10" y="0" width="16" height="27" rx="8" fill="#0a6fd8" /><path d="M3 18c0 9 6 14 15 14s15-5 15-14" fill="none" stroke="#0a6fd8" strokeWidth="3" /><circle cx="18" cy="41" r="4" fill="#0a6fd8" /></svg>
        </Slot>
        <Slot c="ml-[20px] w-[46px]">
          <svg width="42" height="32" viewBox="0 0 42 32"><rect width="42" height="32" rx="5" fill="#0a6fd8" /><path d="M6 9h30M6 16h30M6 23h30M12 5v22M20 5v22M28 5v22" stroke="#fff" strokeWidth="2" /></svg>
        </Slot>
        <Slot c="ml-[20px] w-[46px]">
          <svg width="42" height="36" viewBox="0 0 42 36"><path d="M13 0 0 6l4 10 6-2v22h22V14l6 2 4-10L29 0c-2 5-14 5-16 0z" fill="#0a6fd8" /></svg>
        </Slot>
        <Slot c="ml-[15px] w-[46px]">
          <div className="grid grid-cols-2 gap-[3px]">
            <span className="h-[16px] w-[16px] rounded-[4px] bg-[#6d70f0]" />
            <span className="h-[16px] w-[16px] rounded-[4px] bg-[#8a90f4]" />
            <span className="h-[16px] w-[16px] rounded-[4px] bg-[#7a60d8]" />
            <span className="h-[16px] w-[16px] rounded-[4px] bg-[#c06a90]" />
          </div>
        </Slot>
      </div>
      <div className="absolute top-[1942px] left-[2980px] flex h-[72px] w-[78px] -rotate-12 items-center justify-center rounded-[8px] bg-[#f26f24] text-[84px] leading-none font-bold text-white italic">S</div>
    </div>
  );
}
